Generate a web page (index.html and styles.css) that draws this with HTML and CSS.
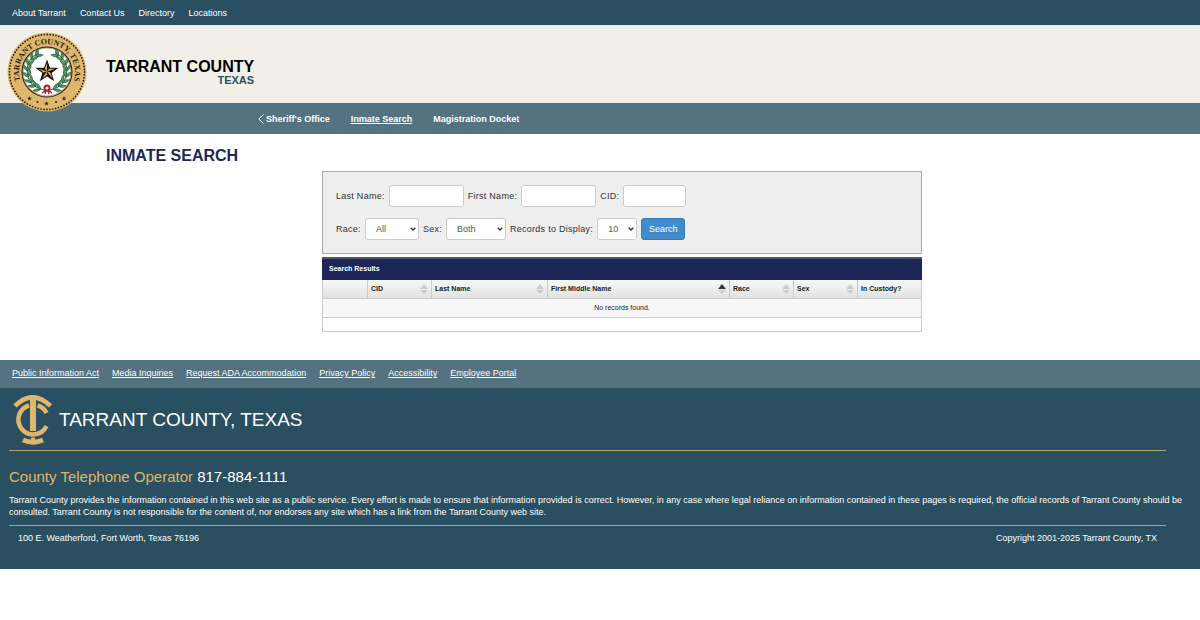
FILE: index.html
```
<!DOCTYPE html>
<html lang="en">
<head>
  <meta charset="UTF-8">
  <meta name="viewport" content="width=device-width, initial-scale=1">
  <title>Inmate Search - Tarrant County, Texas</title>
  <link rel="stylesheet" href="styles.css">
</head>
<body>

  <nav class="top-links">
    <a href="#">About Tarrant</a>
    <a href="#">Contact Us</a>
    <a href="#">Directory</a>
    <a href="#">Locations</a>
  </nav>

  <header class="banner">
    <svg class="seal" viewBox="0 0 160 160" role="img" aria-label="Tarrant County seal">
      <defs>
        <path id="sealArc" d="M29.200 103.700 A56 56 0 1 1 130.800 103.700"/>
        <path id="leaf" d="M0 0 Q-8 -3 -8 -13 Q0 -10 0 0 Q1 -10 8 -13 Q9 -3 0 0"/>
        <path id="star" d="M0 -10 L2.400 -3.200 9.500 -3.100 3.800 1.200 5.900 8.100 0 4 -5.900 8.100 -3.800 1.200 -9.500 -3.100 -2.400 -3.200Z"/>
        <g id="branch">
          <path d="M74 116 Q38 108 40 74 Q43 50 64 42" fill="none" stroke="#5c4a2c" stroke-width="2"/>
          <g fill="#46a06a" stroke="#1d4a30">
            <use href="#leaf" transform="translate(67 115) rotate(-68)"/>
            <use href="#leaf" transform="translate(57 109) rotate(-54)"/>
            <use href="#leaf" transform="translate(49 101) rotate(-38)"/>
            <use href="#leaf" transform="translate(43 90) rotate(-20)"/>
            <use href="#leaf" transform="translate(41 78) rotate(-4)"/>
            <use href="#leaf" transform="translate(43 66) rotate(14)"/>
            <use href="#leaf" transform="translate(49 55) rotate(34)"/>
            <use href="#leaf" transform="translate(57 47) rotate(54)"/>
          </g>
        </g>
      </defs>
      <circle cx="80" cy="80" r="79" fill="#dfb76c"/>
      <circle cx="80" cy="80" r="75" fill="none" stroke="#2a2112" stroke-width="3.600" stroke-dasharray="0 5.890" stroke-linecap="round"/>
      <circle cx="80" cy="80" r="51" fill="#2a2112"/>
      <circle cx="80" cy="80" r="49" fill="#b9a98a"/>
      <circle cx="80" cy="80" r="47" fill="#fff"/>
      <text class="seal-text"><textPath href="#sealArc" startOffset="50%" text-anchor="middle">TARRANT COUNTY, TEXAS</textPath></text>
      <use href="#branch"/>
      <use href="#branch" transform="translate(160 0) scale(-1 1)"/>
      <circle cx="80" cy="112" r="5" fill="#fff" stroke="#a81f35" stroke-width="4"/>
      <path d="M77 117 L70 122 M83 117 L90 122 M78 118 L76 124 M82 118 L84 124" stroke="#a81f35" stroke-width="3"/>
      <g transform="translate(80 79) scale(2.100)">
        <use href="#star" fill="#d4b06a" stroke="#17130d"/>
        <path d="M0 0 V-10 L2.400 -3.200Z M0 0 L9.500 -3.100 3.800 1.200Z M0 0 L5.900 8.100 0 4Z M0 0 L-5.900 8.100 -3.800 1.200Z M0 0 L-9.500 -3.100 -2.400 -3.200Z" fill="#17130d"/>
      </g>
      <g fill="#2a2112">
        <use href="#star" transform="translate(45 133) scale(.5)"/>
        <use href="#star" transform="translate(79 143) scale(.5)"/>
        <use href="#star" transform="translate(114 133) scale(.5)"/>
        <circle cx="61" cy="140" r="2"/>
        <circle cx="98" cy="140" r="2"/>
      </g>
    </svg>
    <div class="site-name">
      TARRANT COUNTY
      <span>TEXAS</span>
    </div>
  </header>

  <nav class="section-nav">
    <a href="#" class="back">
      <svg viewBox="0 0 6 10"><path d="M5.500 .5 L.8 5 L5.500 9.500"/></svg>Sheriff's Office
    </a>
    <a href="#" class="current">Inmate Search</a>
    <a href="#">Magistration Docket</a>
  </nav>

  <h1>INMATE SEARCH</h1>

  <main>
    <form class="search-form">
      <div class="form-row">
        <label for="lastName">Last Name:</label>
        <input type="text" id="lastName">
        <label for="firstName">First Name:</label>
        <input type="text" id="firstName">
        <label for="cid">CID:</label>
        <input type="text" id="cid" class="short">
      </div>
      <div class="form-row">
        <label for="race">Race:</label>
        <select id="race" class="race"><option>All</option></select>
        <label for="sex">Sex:</label>
        <select id="sex" class="sex"><option>Both</option></select>
        <label for="records">Records to Display:</label>
        <select id="records" class="records"><option>10</option></select>
        <button type="button">Search</button>
      </div>
    </form>

    <div class="results">
      <h2>Search Results</h2>
      <table>
        <colgroup>
          <col class="col-select">
          <col class="col-cid">
          <col class="col-last">
          <col>
          <col class="col-small">
          <col class="col-small">
          <col class="col-small">
        </colgroup>
        <thead>
          <tr>
            <th></th>
            <th class="sortable">CID</th>
            <th class="sortable">Last Name</th>
            <th class="sortable asc">First Middle Name</th>
            <th class="sortable">Race</th>
            <th class="sortable">Sex</th>
            <th>In Custody?</th>
          </tr>
        </thead>
        <tbody>
          <tr><td colspan="7">No records found.</td></tr>
        </tbody>
      </table>
      <div class="pager"></div>
    </div>
  </main>

  <nav class="bottom-links">
    <a href="#">Public Information Act</a>
    <a href="#">Media Inquiries</a>
    <a href="#">Request ADA Accommodation</a>
    <a href="#">Privacy Policy</a>
    <a href="#">Accessibility</a>
    <a href="#">Employee Portal</a>
  </nav>

  <footer>
    <div class="footer-brand">
      <svg class="monogram" viewBox="0 0 76 100" role="img" aria-label="Tarrant County logo">
        <g fill="none" stroke="#dfb76c">
          <path d="M3 22 Q38 -13 74 22" stroke-width="9"/>
          <path d="M39 6 V72" stroke-width="12"/>
          <path d="M31 21 A29.500 29.500 0 1 0 66 62" stroke-width="9"/>
          <path d="M48 21 Q60 24 66 36" stroke-width="9"/>
          <path d="M39 85 V92" stroke-width="8"/>
          <path d="M19 90 Q39 99 59 90" stroke-width="10"/>
        </g>
      </svg>
      <span>TARRANT COUNTY, TEXAS</span>
    </div>
    <p class="operator">County Telephone Operator <span>817-884-1111</span></p>
    <p class="disclaimer">Tarrant County provides the information contained in this web site as a public service. Every effort is made to ensure that information provided is correct. However, in any case where legal reliance on information contained in these pages is required, the official records of Tarrant County should be consulted. Tarrant County is not responsible for the content of, nor endorses any site which has a link from the Tarrant County web site.</p>
    <div class="footer-bottom">
      <span>100 E. Weatherford, Fort Worth, Texas 76196</span>
      <span>Copyright 2001-2025 Tarrant County, TX</span>
    </div>
  </footer>

</body>
</html>
```
FILE: styles.css
```
* {
  box-sizing: border-box;
}
body {
  margin: 0;
  font-family: "Liberation Sans", Arial, sans-serif;
  font-size: 9px;
  line-height: 12px;
  color: #333;
  background: #fff;
}
a {
  color: #fff;
  text-decoration: none;
}

/* header */
.top-links {
  display: flex;
  gap: 14px;
  padding: 7px 12px 6px;
  background: #294f60;
}
.banner {
  display: flex;
  align-items: center;
  height: 78px;
  padding-left: 7px;
  background: #f2efe8;
}
.seal {
  position: relative;
  top: 8px;
  width: 80px;
  height: 80px;
}
.seal-text {
  font-family: "Liberation Serif", serif;
  font-size: 16px;
  font-weight: bold;
  fill: #2a2112;
}
.site-name {
  margin-left: 19px;
  padding-top: 17px;
  font-size: 16px;
  line-height: 14px;
  font-weight: bold;
  color: #000;
}
.site-name span {
  display: block;
  text-align: right;
  font-size: 11px;
  line-height: 12px;
  color: #294f60;
}
.section-nav {
  display: flex;
  gap: 21px;
  padding: 10px 258px 9px;
  background: #54727f;
  font-weight: bold;
  white-space: nowrap;
}
.back {
  display: flex;
  align-items: center;
  gap: 2px;
}
.back svg {
  width: 6px;
  height: 10px;
  fill: none;
  stroke: #fff;
}
.section-nav .current {
  text-decoration: underline;
}

/* search form */
h1 {
  margin: 12px 0 6px 106px;
  font-size: 16px;
  line-height: 19px;
  color: #1d2757;
}
main {
  max-width: 644px;
  margin: 0 auto;
  padding-left: 44px;
}
.search-form {
  display: flex;
  flex-direction: column;
  gap: 11px;
  padding: 13px;
  background: #eee;
  border: 1px solid #aaa;
}
.form-row {
  display: flex;
  flex-wrap: wrap;
  align-items: center;
  gap: 4px;
}
.form-row label {
  letter-spacing: .03em;
}
.form-row input,
.form-row select {
  height: 22px;
  border: 1px solid #ccc;
  border-radius: 3px;
  background: #fff;
  font: inherit;
  color: #555;
}
.form-row input {
  width: 75px;
}
.form-row .short {
  width: 63px;
}
.form-row select {
  appearance: none;
  padding: 0 10px;
  background: #fff url("data:image/svg+xml,%3Csvg xmlns='http://www.w3.org/2000/svg' viewBox='0 0 6 4'%3E%3Cpath d='M.7 .7 L3 3 L5.300 .7' fill='none' stroke='%23333' stroke-width='1.300'/%3E%3C/svg%3E") no-repeat right 2px center / 6px 4px;
}
.race {
  width: 54px;
}
.sex {
  width: 60px;
}
.records {
  width: 40px;
}
.form-row button {
  width: 44px;
  height: 22px;
  padding: 0;
  border: 1px solid #357ebd;
  border-radius: 3px;
  background: #428bca;
  font: inherit;
  color: #fff;
}

/* results */
.results {
  margin-top: 3px;
  font-size: 7px;
}
h2 {
  margin: 0;
  padding: 4px 7px 5px;
  border-top: 2px solid #4c5870;
  background: #1d2757;
  font-size: 7px;
  color: #fff;
}
table {
  width: 100%;
  table-layout: fixed;
  border-collapse: collapse;
}
th,
td {
  border: 1px solid #ccc;
  padding: 3px;
  color: #222;
}
th {
  background: linear-gradient(#f7f7f7, #e2e2e2);
  border-top: 0;
  text-align: left;
}
td {
  background: #f7f7f7;
  text-align: center;
}
.col-select {
  width: 45px;
}
.col-cid,
.col-small {
  width: 64px;
}
.col-last {
  width: 116px;
}
.sortable::before,
.sortable::after {
  content: "";
  float: right;
  margin-top: 1px;
  border: 4px solid transparent;
  border-top-width: 0;
  border-bottom: 5px solid #ccc;
}
.sortable::after {
  margin: 7px -8px 0 0;
  border-top: 4px solid #ccc;
  border-bottom-width: 0;
}
.sortable.asc::before {
  border-bottom-color: #333;
}
.pager {
  height: 14px;
  border: 1px solid #ccc;
  border-top: 0;
}

/* footer */
.bottom-links {
  display: flex;
  gap: 13px;
  margin-top: 28px;
  padding: 7px 12px 9px;
  background: #54727f;
}
.bottom-links a {
  text-decoration: underline;
}
footer {
  padding: 7px 12px 18px 9px;
  background: #294f60;
  color: #fff;
}
.footer-brand {
  display: flex;
  align-items: center;
  gap: 7px;
  margin-right: 22px;
  padding: 0 0 5px 4px;
  border-bottom: 1px solid #b3a676;
  font-size: 19px;
}
.monogram {
  width: 39px;
  height: 50px;
}
.operator {
  margin: 17px 0 8px;
  font-size: 15px;
  line-height: 18px;
  color: #dfb76c;
}
.operator span {
  color: #fff;
}
.disclaimer {
  margin: 0;
  padding-bottom: 7px;
}
.footer-bottom {
  display: flex;
  justify-content: space-between;
  margin-right: 22px;
  padding: 6px 9px 7px;
  border-top: 1px solid #b3a676;
}
```
